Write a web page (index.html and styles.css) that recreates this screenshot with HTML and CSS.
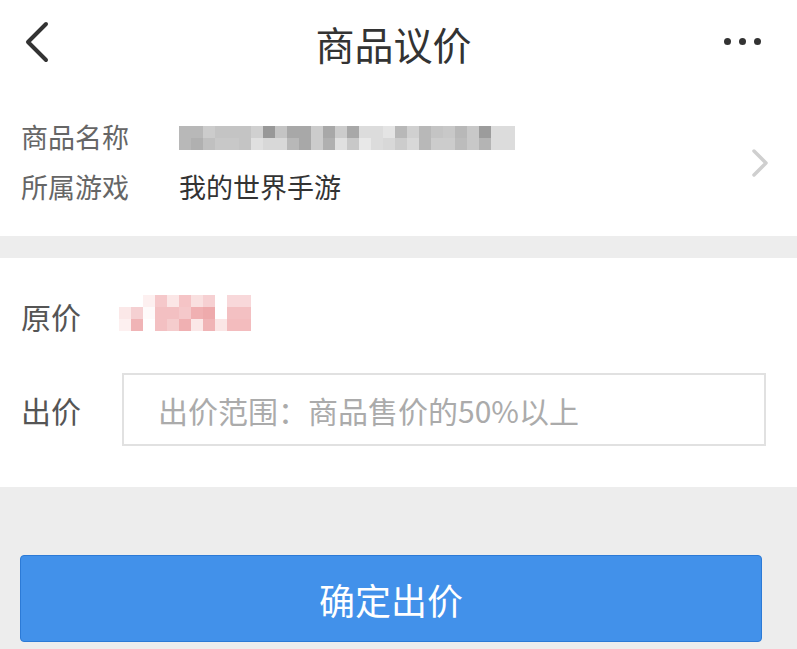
FILE: index.html
```html
<!DOCTYPE html>
<html lang="zh-CN">
<head>
<meta charset="utf-8">
<title>商品议价</title>
<link rel="stylesheet" href="styles.css">
</head>
<body>
<header class="topbar">
  <svg class="back" width="30" height="44" viewBox="0 0 30 44"><path d="M21 4 L3 22 L21 40" fill="none" stroke="#333" stroke-width="4" stroke-linecap="round" stroke-linejoin="round"/></svg>
  <h1 class="title">商品议价</h1>
  <div class="more"><span></span><span></span><span></span></div>
</header>

<section class="info">
  <div class="info-rows">
    <div class="row">
      <span class="label">商品名称</span>
      <div class="mosaic grey">
        <i style="background:#b8b8b8"></i><i style="background:#b8b8b8"></i><i style="background:#cccccc"></i><i style="background:#c4c4c4"></i><i style="background:#c4c4c4"></i><i style="background:#c4c4c4"></i><i style="background:#d0d0d0"></i><i style="background:#989898"></i><i style="background:#c4c4c4"></i><i style="background:#a8a8a8"></i><i style="background:#a8a8a8"></i><i style="background:#cccccc"></i><i style="background:#a8a8a8"></i><i style="background:#cccccc"></i><i style="background:#a8a8a8"></i><i style="background:#dcdcdc"></i><i style="background:#dcdcdc"></i><i style="background:#e4e4e4"></i><i style="background:#b8b8b8"></i><i style="background:#d0d0d0"></i><i style="background:#b8b8b8"></i><i style="background:#c4c4c4"></i><i style="background:#c8c8c8"></i><i style="background:#b8b8b8"></i><i style="background:#c8c8c8"></i><i style="background:#9c9c9c"></i><i style="background:#dcdcdc"></i><i style="background:#dcdcdc"></i>
        <i style="background:#b8b8b8"></i><i style="background:#b0b0b0"></i><i style="background:#c0c0c0"></i><i style="background:#c8c8c8"></i><i style="background:#c8c8c8"></i><i style="background:#c4c4c4"></i><i style="background:#e0e0e0"></i><i style="background:#d8d8d8"></i><i style="background:#d8d8d8"></i><i style="background:#b8b8b8"></i><i style="background:#a8a8a8"></i><i style="background:#cccccc"></i><i style="background:#b0b0b0"></i><i style="background:#e0e0e0"></i><i style="background:#c8c8c8"></i><i style="background:#e8e8e8"></i><i style="background:#dcdcdc"></i><i style="background:#d8d8d8"></i><i style="background:#cccccc"></i><i style="background:#d8d8d8"></i><i style="background:#b8b8b8"></i><i style="background:#cccccc"></i><i style="background:#cccccc"></i><i style="background:#bcbcbc"></i><i style="background:#c8c8c8"></i><i style="background:#b4b4b4"></i><i style="background:#dcdcdc"></i><i style="background:#dcdcdc"></i>
      </div>
    </div>
    <div class="row">
      <span class="label">所属游戏</span>
      <span class="value">我的世界手游</span>
    </div>
  </div>
  <svg class="arrow" width="18" height="30" viewBox="0 0 18 30"><path d="M3 3 L15 15 L3 27" fill="none" stroke="#cfcfcf" stroke-width="3.5" stroke-linecap="round" stroke-linejoin="round"/></svg>
</section>

<section class="offer">
  <div class="row price-row">
    <span class="label big">原价</span>
    <div class="mosaic pink">
      <i style="background:#ffffff"></i><i style="background:#ffffff"></i><i style="background:#fdf0f0"></i><i style="background:#f5c8ca"></i><i style="background:#fbe6e6"></i><i style="background:#f5c4c6"></i><i style="background:#f9e0e0"></i><i style="background:#f6d0d2"></i><i style="background:#ffffff"></i><i style="background:#f8d8da"></i><i style="background:#f8d8da"></i>
      <i style="background:#fbe8e8"></i><i style="background:#f5d0d2"></i><i style="background:#fefafa"></i><i style="background:#f3c0c2"></i><i style="background:#f3c0c2"></i><i style="background:#f5c8ca"></i><i style="background:#f0b0b2"></i><i style="background:#eeaaac"></i><i style="background:#ffffff"></i><i style="background:#f3c0c2"></i><i style="background:#f3c0c2"></i>
      <i style="background:#fdf0f0"></i><i style="background:#f0b4b6"></i><i style="background:#ffffff"></i><i style="background:#f3c0c2"></i><i style="background:#f5cccd"></i><i style="background:#f0b0b2"></i><i style="background:#fbe8e8"></i><i style="background:#f0b4b6"></i><i style="background:#fbe6e6"></i><i style="background:#f3bcbe"></i><i style="background:#f3bcbe"></i>
    </div>
  </div>
  <div class="row bid-row">
    <span class="label big">出价</span>
    <input class="bid-input" type="text" placeholder="出价范围：商品售价的50%以上">
  </div>
</section>

<div class="actions">
  <button class="submit" type="button">确定出价</button>
</div>
</body>
</html>
```

FILE: styles.css
```css
* { box-sizing: border-box; }

html, body {
  margin: 0;
  padding: 0;
  background: #ededed;
  font-family: "Noto Sans CJK SC", "Noto Sans", sans-serif;
}

.topbar {
  height: 88px;
  background: #fff;
  display: flex;
  align-items: center;
  justify-content: space-between;
  padding: 0 36px 0 25px;
}

.back { display: block; margin-top: -4px; }

.title {
  margin: 0;
  font-size: 39px;
  font-weight: 400;
  color: #333;
  line-height: 1;
  margin-top: -2px;
  margin-left: 8px;
}

.more {
  display: flex;
  gap: 8px;
  margin-top: -6px;
}
.more span {
  width: 7px;
  height: 7px;
  border-radius: 50%;
  background: #333;
}

.info {
  background: #fff;
  display: flex;
  align-items: center;
  justify-content: space-between;
  padding: 23px 28px 25px 21px;
}

.row {
  display: flex;
  align-items: center;
  height: 50px;
}

.label {
  width: 158px;
  flex: none;
  font-size: 27px;
  color: #666;
}

.value {
  font-size: 27px;
  color: #333;
}

.arrow { display: block; margin-top: 4px; }

.mosaic {
  display: grid;
}
.mosaic i { display: block; }

.mosaic.grey {
  grid-template-columns: repeat(28, 12px);
  grid-auto-rows: 12px;
  margin-top: 4px;
}

.offer {
  background: #fff;
  margin-top: 22px;
  padding: 32px 31px 41px 21px;
}

.label.big {
  width: 98px;
  font-size: 30px;
  color: #555;
}

.price-row { height: 52px; }

.mosaic.pink {
  grid-template-columns: repeat(11, 12px);
  grid-auto-rows: 12px;
  margin-top: -6px;
}

.bid-row {
  margin-top: 31px;
  height: 73px;
}

.bid-row .label.big { width: 101px; }

.bid-input {
  flex: 1;
  height: 73px;
  border: 2px solid #e1e1e1;
  border-radius: 0;
  padding: 0 0 0 34px;
  font-family: inherit;
  font-size: 30px;
  color: #333;
  outline: none;
  background: #fff;
}
.bid-input::placeholder { color: #ababab; }

.actions {
  padding: 68px 35px 0 20px;
}

.submit {
  display: block;
  width: 100%;
  height: 87px;
  background: #4291ea;
  border: 1px solid #2c7ad6;
  border-radius: 4px;
  color: #fff;
  font-family: inherit;
  font-size: 36px;
  font-weight: 400;
  padding: 0;
}
```
